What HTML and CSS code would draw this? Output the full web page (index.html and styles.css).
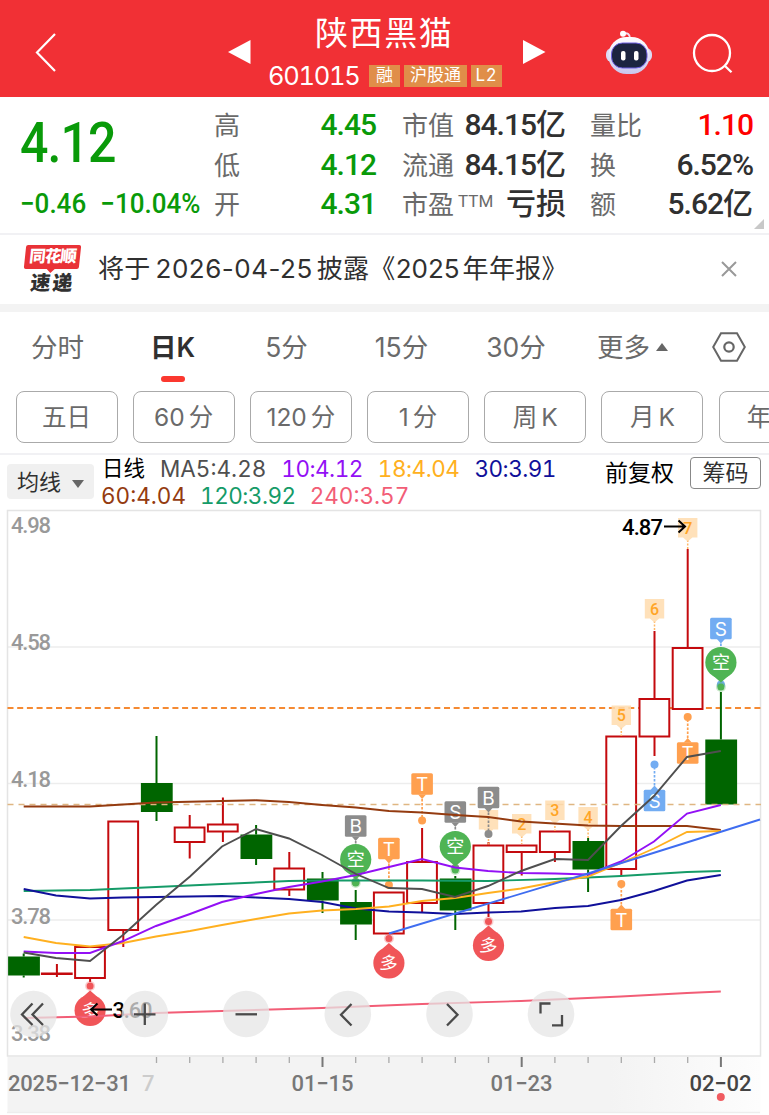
FILE: index.html
```html
<!DOCTYPE html>
<html lang="zh-CN">
<head>
<meta charset="UTF-8">
<meta name="viewport" content="width=device-width, initial-scale=1.0">
<title>陕西黑猫 601015</title>
<link rel="stylesheet" href="styles.css">
</head>
<body>
<header class="header">
    <svg class="back" width="24" height="42" viewBox="0 0 24 42"><path d="M21 2 3 20.500 21 39" fill="none" stroke="#fff" stroke-width="2.200"/></svg>
    <svg class="prev" width="23" height="26" viewBox="0 0 23 26"><path d="M0 13 22.500 1v24z" fill="#fff"/></svg>
    <div class="stock">
        <h1>陕西黑猫</h1>
        <div class="code"><span class="num">601015</span><span class="tag tag-rong">融</span><span class="tag tag-hgt">沪股通</span><span class="tag tag-l2">L2</span></div>
    </div>
    <svg class="next" width="23" height="26" viewBox="0 0 23 26"><path d="M22.500 13 0 1v24z" fill="#fff"/></svg>
    <svg class="robot" width="48" height="46" viewBox="0 0 48 46">
        <defs><linearGradient id="head" x1="0" y1="0" x2="0" y2="1"><stop offset="0" stop-color="#fff"/><stop offset="1" stop-color="#c9c6ee"/></linearGradient></defs>
        <path d="M18 3.500q7-1.500 7 5" fill="none" stroke="#f3dff0" stroke-width="2"/>
        <circle cx="18" cy="3.700" r="3" fill="#fff"/>
        <rect x="1" y="18" width="46" height="14" rx="6" fill="#dcdaf4"/>
        <rect x="3.500" y="7" width="41" height="37" rx="18" fill="url(#head)"/>
        <rect x="6.500" y="13" width="35.500" height="25" rx="11" fill="#1c2440" stroke="#6c5fe0" stroke-width="1"/>
        <rect x="16" y="21" width="4.500" height="9.500" rx="2" fill="#fff"/>
        <rect x="29" y="21" width="4.500" height="9.500" rx="2" fill="#fff"/>
    </svg>
    <svg class="search" width="42" height="42" viewBox="0 0 42 42"><circle cx="20" cy="20" r="18" fill="none" stroke="#fff" stroke-width="2.300"/><path d="m32.500 32.500 7 6.800" stroke="#fff" stroke-width="2.300"/></svg>
</header>

<section class="quote">
    <div class="price">
        <strong>4.12</strong>
        <div class="change"><span>−0.46</span><span>−10.04%</span></div>
    </div>
    <dl class="stats">
        <dt>高</dt><dd class="down">4.45</dd><dt>市值</dt><dd>84.15<i>亿</i></dd><dt>量比</dt><dd class="up">1.10</dd>
        <dt>低</dt><dd class="down">4.12</dd><dt>流通</dt><dd>84.15<i>亿</i></dd><dt>换</dt><dd>6.52%</dd>
        <dt>开</dt><dd class="down">4.31</dd><dt>市盈<sup>TTM</sup></dt><dd><i>亏损</i></dd><dt>额</dt><dd>5.62<i>亿</i></dd>
    </dl>
    <span class="corner"></span>
</section>

<section class="notice">
    <div class="express"><b>同花顺</b><em>速递</em></div>
    <p>将于<span class="date">2026-04-25</span>披露《<span class="year">2025</span>年年报》</p>
    <svg width="16" height="16" viewBox="0 0 16 16"><path d="m1 1 14 14M15 1 1 15" stroke="#999" stroke-width="2"/></svg>
</section>

<nav class="tabs">
    <a>分时</a><a class="active">日K</a><a>5分</a><a>15分</a><a>30分</a><a>更多<span class="caret-up"></span></a>
    <svg width="34" height="30" viewBox="0 0 34 30"><path d="M9 1.200h16l7.800 13.800L25 28.800H9L1.200 15z" fill="none" stroke="#666" stroke-width="2"/><circle cx="17" cy="15" r="4.700" fill="none" stroke="#666" stroke-width="2.200"/></svg>
</nav>

<nav class="periods">
    <a>五日</a><a>60<span>分</span></a><a>120<span>分</span></a><a>1<span>分</span></a><a>周<span>K</span></a><a>月<span>K</span></a><a class="year-k">年</a>
</nav>

<section class="legend">
    <button class="ma-select">均线<span class="caret-down"></span></button>
    <div class="ma">
        <div><span class="cycle">日线</span><span class="ma5">MA5:4.28</span><span class="ma10">10:4.12</span><span class="ma18">18:4.04</span><span class="ma30">30:3.91</span></div>
        <div><span class="ma60">60:4.04</span><span class="ma120">120:3.92</span><span class="ma240">240:3.57</span></div>
    </div>
    <span class="adjust">前复权</span>
    <button class="chips">筹码</button>
</section>

<svg class="chart" width="769" height="607" viewBox="0 508 769 607">
    <defs>
        <linearGradient id="axis" x1="0" y1="0" x2="1" y2="0"><stop offset="0.800" stop-color="#f3f3f3"/><stop offset="1" stop-color="#fdfdfd"/></linearGradient>
    </defs>
    <rect x="7.500" y="1057" width="753" height="56" fill="url(#axis)"/>
    <path class="grid" d="M8 647H760M8 783.500H760M8 920H760M7 1112.500H760"/>
    <rect class="frame" x="7.500" y="510.500" width="753" height="545.500"/>
    <g class="scale">
        <text x="11" y="533" textLength="40">4.98</text>
        <text x="11" y="650" textLength="40">4.58</text>
        <text x="11" y="786.500" textLength="40">4.18</text>
        <text x="11" y="923.500" textLength="40">3.78</text>
        <text x="11" y="1040.500" textLength="40">3.38</text>
    </g>
    <path class="cost" d="M7.500 708H761"/>
    <g id="candles"></g>
    <path class="last" d="M7.500 804.500H761"/>
    <g id="marks"></g>
    <g class="lines">
        <polyline class="ma60" points="23.700,806.500 90,806.500 156,802.500 222,801 256,800.300 289,802 322,805 356,807.500 389,811 422,812.500 455,815 488,817 521,821.500 554,823.500 588,825.500 621,826 687,826 720.800,830"/>
        <polyline class="ma120" points="23.700,891 90,890 156,887 222,884 289,881 322,880.500 422,880.500 488,881 555,879 621,876 687,872 720.800,871"/>
        <polyline class="ma240" points="23.700,1018 90,1016.500 156,1013 222,1011 322,1008 422,1004 521,1001 621,996.500 687,993 720.800,991.500"/>
        <polyline class="ma30" points="23.700,889 56,895.500 90,898.500 123,897.500 156,897 222,896 256,897.500 289,899 322,902 356,908.500 389,911.500 422,912.500 455,914 488,912.500 521,911.500 555,908 588,906 621,900 654,891 687,880.500 720.800,875"/>
        <polyline class="ma18" points="23.700,937 56,943 90,946.500 123,943 156,936.500 190,931 222,925 256,919 289,913.500 322,910.500 356,909 389,906.500 422,901 455,898 488,893 521,888.500 555,882 588,876.500 621,863 654,848.500 687,832 720.800,831"/>
        <polyline class="ma10" points="23.700,951.500 56,953 90,953 123,941 156,926 190,914 222,902 256,894 289,887 322,881.500 356,875 389,867 422,859 455,867.500 488,871 521,873 555,873.500 588,874.500 621,861.500 654,841.500 687,813.500 720.800,805"/>
        <polyline class="ma5" points="23.700,952.500 56,958 90,961 123,935 156,905 190,876.500 222,846.500 256,829 289,838.500 322,855 356,874 389,888 422,889 455,897 488,886 521,871 555,859 588,860 621,826 654,796 687,757 720.800,751"/>
        <polyline class="trend" points="389,933.500 588,873.500 760,819.500"/>
    </g>
    <g class="peak">
        <text x="622" y="535" textLength="41">4.87</text>
        <path d="M664 526.500H685M678.500 520.500 685 526.500 678.500 532.500"/>
        <text x="112.500" y="1017.500" textLength="40">3.60</text>
        <path d="M112 1009.500H91M97.500 1003.500 91 1009.500 97.500 1015.500"/>
    </g>
    <g id="ticks"></g>
    <g class="days">
        <text x="8" y="1091" textLength="123">2025−12−31</text>
        <text class="faded" x="142" y="1091">7</text>
        <text x="291.500" y="1091" textLength="62">01−15</text>
        <text x="490.500" y="1091" textLength="62">01−23</text>
        <text class="today" x="689.500" y="1091" textLength="62">02−02</text>
        <circle cx="720.800" cy="1097" r="4" fill="#f05b60"/>
    </g>
    <g class="tools">
        <circle cx="33.500" cy="1014" r="23.300"/><path d="M32.500 1003.500 22 1014.500 32.500 1025M43 1003.500 32.500 1014.500 43 1025"/>
        <circle cx="144.800" cy="1014" r="23.300"/><path d="M134 1014.300H155.500M144.800 1003.500V1025"/>
        <circle cx="246.200" cy="1014" r="23.300"/><path d="M235.500 1014.300H257"/>
        <circle cx="347.800" cy="1014" r="23.300"/><path d="M351.500 1004 341 1014.800 351.500 1025.500"/>
        <circle cx="449.500" cy="1014" r="23.300"/><path d="M447 1004 457.500 1014.800 447 1025.500"/>
        <circle cx="551" cy="1014" r="23.300"/><path d="M540.500 1013.500V1003.500H550.500M552 1025.300H562V1015"/>
    </g>
</svg>
<script src="chart.js"></script>
</body>
</html>
```

FILE: styles.css
```css
* {
    box-sizing: border-box;
}
body {
    margin: 0;
    width: 769px;
    height: 1115px;
    overflow: hidden;
    background: #fff;
    color: #303030;
    font-family: Inter, "Noto Sans CJK SC", sans-serif;
}
h1, p, dl, dd {
    margin: 0;
}
button {
    padding: 0;
    font: inherit;
    background: none;
}
svg {
    display: block;
    flex: none;
}

/* header */
.header {
    display: flex;
    height: 97px;
    background: #f13035;
    color: #fff;
}
.back { margin: 32px 0 0 34px; }
.prev { margin: 39px 0 0 170px; }
.stock {
    flex: none;
    width: 250px;
    margin-left: 17px;
}
.stock h1 {
    margin: 11px 0 0 47px;
    font-size: 33px;
    line-height: 44px;
    font-weight: 400;
    letter-spacing: 1.6px;
    white-space: nowrap;
}
.code {
    display: flex;
    align-items: center;
    height: 40px;
}
.num {
    flex: none;
    width: 101px;
    font-size: 25.500px;
    line-height: 40px;
    margin-top: 1px;
    letter-spacing: -1.3px;
    font-variant-numeric: tabular-nums;
}
.tag {
    flex: none;
    height: 22px;
    margin: 2px 4px 0 0;
    background: #e08e49;
    font-size: 17px;
    line-height: 20px;
    text-align: center;
    white-space: nowrap;
}
.tag-rong { width: 31px; }
.tag-hgt { width: 63px; }
.tag-l2 { width: 31px; letter-spacing: 1px; }
.next { margin: 39px 0 0 5px; }
.robot { margin: 30px 0 0 59px; }
.search { margin: 33px 0 0 39px; }

/* quote */
.quote {
    position: relative;
    display: flex;
    height: 138px;
    padding: 8px 0 0 20px;
    border-bottom: 2px solid #f1f1f4;
    font-family: Roboto, "Noto Sans CJK SC", sans-serif;
}
.price {
    width: 194px;
    color: #099a09;
}
.price strong {
    display: block;
    height: 79px;
    font-size: 55px;
    line-height: 76px;
    font-weight: 500;
    letter-spacing: -1px;
    transform: scaleX(0.91);
    transform-origin: 0 0;
}
.change {
    display: flex;
    gap: 15px;
    font-size: 27.500px;
    line-height: 39px;
    font-weight: 500;
    white-space: nowrap;
    transform: scaleX(0.945);
    transform-origin: 0 0;
}
.stats {
    display: grid;
    grid-template-columns: 60px 102px 101px 89px 60px 127px;
    grid-template-rows: repeat(3, 39.500px);
    width: 540px;
}
.stats dt {
    font-size: 26px;
    line-height: 42px;
    color: #6a6a6a;
    white-space: nowrap;
}
.stats dt:nth-of-type(3n+2) { margin-left: 26px; }
.stats dt:nth-of-type(3n) { margin-left: 24px; }
.stats dd {
    display: flex;
    justify-content: flex-end;
    font-size: 30px;
    line-height: 40px;
    font-weight: 500;
    letter-spacing: -1px;
    white-space: nowrap;
}
.stats dd i {
    font-style: normal;
    font-size: 30px;
    line-height: 40px;
    letter-spacing: 0;
}
.stats .down { color: #099a09; }
.stats .up { color: #f00; }
.stats sup {
    margin-left: 4px;
    font-size: 17px;
    line-height: 0;
    vertical-align: 7px;
}
.corner {
    position: absolute;
    right: 5px;
    bottom: 4px;
    border: 5px solid #c8c8c8;
    border-top-color: transparent;
    border-left-color: transparent;
}

/* notice */
.notice {
    display: flex;
    height: 77px;
    border-bottom: 8px solid #f3f3f3;
}
.express {
    width: 59px;
    height: 50px;
    margin: 10px 0 0 24px;
    text-align: center;
    font-weight: 900;
}
.express b {
    position: relative;
    display: block;
    width: 55px;
    height: 24px;
    margin-left: 1px;
    border-radius: 2px;
    background: #e93237;
    color: #fff;
    font-size: 16.500px;
    line-height: 23px;
    letter-spacing: -1px;
    transform: skewX(-6deg);
}
.express b::after {
    content: "";
    position: absolute;
    left: 23px;
    top: 24px;
    border: 4px solid transparent;
    border-top-color: #e93237;
}
.express em {
    display: block;
    margin-left: -2px;
    font-size: 20px;
    font-style: normal;
    line-height: 28px;
    letter-spacing: 2px;
    transform: skewX(-6deg);
}
.notice p {
    width: 622px;
    margin-left: 15px;
    font-size: 26px;
    line-height: 68px;
    letter-spacing: 0.3px;
    white-space: nowrap;
}
.date { margin: 0 4px 0 5px; letter-spacing: 0.5px; }
.year { margin-right: 3px; letter-spacing: 0; }
.notice svg { margin: 26px 0 0 1px; }

/* tabs */
.tabs {
    display: grid;
    grid-template-columns: 115px 115px 113px 117px 112px 109px 1fr;
    height: 73px;
    color: #6a6a6a;
    font-size: 26.500px;
    line-height: 70px;
    text-align: center;
    white-space: nowrap;
}
.tabs a:nth-child(6) { text-align: left; padding-left: 25px; }
.tabs svg { margin: 20px 0 0 31px; }
.tabs .active {
    color: #303030;
    font-weight: 600;
}
.active::after {
    content: "";
    display: block;
    width: 24px;
    height: 6px;
    margin: -6px auto 0;
    border-radius: 3px;
    background: #fb382f;
}
.caret-up {
    display: inline-block;
    margin: 0 0 6px 6px;
    border: 6px solid transparent;
    border-top: 0;
    border-bottom: 8px solid #666;
}
.periods {
    display: flex;
    gap: 15.200px;
    height: 70px;
    padding: 6px 0 0 15.500px;
    border-bottom: 2px solid #f1f1f4;
    overflow: hidden;
    color: #6a6a6a;
}
.periods a {
    flex: none;
    width: 102px;
    height: 52px;
    border: 1.500px solid #aaa;
    border-radius: 8px;
    font-size: 24.500px;
    line-height: 51px;
    text-align: center;
}
.periods span { margin-left: 4px; }
.periods .year-k {
    padding-left: 27px;
    text-align: left;
}

/* moving averages */
.legend {
    display: flex;
    height: 53px;
}
.ma-select {
    width: 87px;
    height: 35px;
    margin: 9px 8px 0 7px;
    border: 0;
    border-radius: 4px;
    background: #f0f0f0;
    color: #303030;
    font-size: 22px;
    line-height: 34px;
}
.caret-down {
    display: inline-block;
    margin: 0 0 2px 11px;
    border: 6px solid transparent;
    border-bottom: 0;
    border-top: 8px solid #666;
}
.ma {
    width: 503px;
    font-size: 22.500px;
    line-height: 27px;
    font-variant-numeric: tabular-nums;
}
.ma div {
    display: flex;
    gap: 15px;
    white-space: nowrap;
}
.ma div + div {
    gap: 14px;
    margin-left: -1px;
}
.ma .ma10, .ma .ma18, .ma .ma30, .ma .ma120 { letter-spacing: -0.5px; }
.cycle { color: #000; font-size: 21.500px; }
.adjust {
    color: #000;
    font-size: 23px;
    line-height: 37px;
}
.chips {
    width: 71px;
    height: 32px;
    margin: 2px 0 0 16px;
    border: 1.500px solid #888;
    border-radius: 4px;
    color: #303030;
    font-size: 23px;
    line-height: 28px;
}
.ma5 { color: #4f4f4f; stroke: #4f4f4f; }
.ma10 { color: #9310f5; stroke: #9310f5; }
.ma18 { color: #ffb020; stroke: #ffb020; }
.ma30 { color: #10109a; stroke: #10109a; }
.ma60 { color: #943b10; stroke: #943b10; }
.ma120 { color: #159b68; stroke: #159b68; }
.ma240 { color: #f25d76; stroke: #f25d76; }
.trend { stroke: #3f6df0; }

/* chart */
.chart {
    font-family: Roboto, "Noto Sans CJK SC", sans-serif;
    font-weight: 500;
}
.lines polyline {
    fill: none;
    stroke-width: 1.900;
}
.grid { stroke: #ededed; stroke-width: 1.500; }
.frame { fill: none; stroke: #e4e4e4; stroke-width: 1.500; }
.scale text { fill: #999; font-size: 22px; }
.cost { stroke: #f58a33; stroke-width: 2; stroke-dasharray: 6 3.700; }
.last { stroke: #dfb682; stroke-width: 1.300; stroke-dasharray: 6 5; }
.rise { fill: #fff; stroke: #c40a0e; stroke-width: 2; }
.fall { fill: #006500; stroke: #006500; stroke-width: 2; }
.peak text { font-size: 22px; fill: #000; }
.peak path { fill: none; stroke: #000; stroke-width: 2; }
.days text { font-size: 22px; fill: #777; }
.days .faded { fill: #ccc; }
.days .today { fill: #444; }
.tools circle { fill: #e6e6e6; opacity: 0.75; }
.tools path { fill: none; stroke: #4a4a4a; stroke-width: 2.300; }
.mark { text-anchor: middle; fill: #fff; font-weight: 400; }
```

FILE: chart.js
```js
const NS = 'http://www.w3.org/2000/svg';
const FIRST = 23.7;
const STEP = 33.2;

// [type, high, body top, body bottom, low]
const candles = [
    ['fall', 953.5, 956.5, 975.5, 977.5],
    ['rise', 964, 973.5, 974, 977],
    ['rise', 947, 947, 978, 982],
    ['rise', 821.5, 821.5, 930, 947],
    ['fall', 736, 783, 812, 821],
    ['rise', 815, 827.5, 842, 858.5],
    ['rise', 797.5, 824.5, 831.5, 842],
    ['fall', 825, 834.5, 859, 865],
    ['rise', 852, 868.5, 889.5, 896],
    ['fall', 872, 878.5, 900.5, 913],
    ['fall', 890, 902, 924.5, 940],
    ['rise', 892.5, 892.5, 933.5, 933.5],
    ['rise', 828, 862, 903, 912.5],
    ['fall', 876, 878.5, 910.5, 930],
    ['rise', 842, 845.5, 903, 917],
    ['rise', 845.5, 845.5, 852, 875.5],
    ['rise', 831.5, 831.5, 852, 862],
    ['fall', 838, 841, 869.5, 892],
    ['rise', 736.5, 736.5, 869, 876],
    ['rise', 631, 699, 736.5, 756],
    ['rise', 549, 648, 709, 709],
    ['fall', 692, 739.5, 804.5, 804.5]
];

// square flags: [candle, label, centre y, dot y, colour]
const flags = [
    [10, 'B', 826, 882, '#8c8c8c'],
    [11, 'T', 848.5, 885, '#ffa04f'],
    [12, 'T', 784, 820.5, '#ffa04f'],
    [13, 'S', 812, 868, '#8c8c8c'],
    [14, 'B', 797.5, 834, '#8c8c8c'],
    [18, 'T', 919.5, 884, '#ffa04f'],
    [19, 'S', 800.5, 764.5, '#72acf2'],
    [20, 'T', 753, 717, '#ffa04f'],
    [21, 'S', 628.5, 684.5, '#72acf2']
];

// countdown digits: [candle, label, centre y, stem end]
const counts = [
    [14, '', 820, 845], [15, '2', 824, 844], [16, '3', 810.5, 831], [17, '4', 817, 838],
    [18, '5', 715.5, 736], [19, '6', 609, 631], [20, '7', 528, 549]
];

// round pins: [candle, label, centre y, dot y, colour]
const pins = [
    [2, '多', 1010.5, 986, '#f05558'],
    [10, '空', 859.5, 883, '#4fb454'],
    [11, '多', 963, 938.5, '#f05558'],
    [13, '空', 846.5, 870, '#4fb454'],
    [14, '多', 945.5, 921.5, '#f05558'],
    [21, '空', 662.5, 687, '#4fb454']
];

function x(i) {
    return FIRST + STEP * i;
}

function add(parent, tag, attrs, text) {
    const el = document.createElementNS(NS, tag);
    for (let key in attrs) {
        el.setAttribute(key, attrs[key]);
    }
    if (text) el.textContent = text;
    parent.appendChild(el);
    return el;
}

const candleLayer = document.getElementById('candles');
candles.forEach(function([type, high, top, bottom, low], i) {
    add(candleLayer, 'path', { class: type, d: `M${x(i)} ${high}V${top}M${x(i)} ${bottom}V${low}` });
    const inset = type === 'fall' ? 1 : 0;
    add(candleLayer, 'rect', {
        class: type, x: x(i) - 15 + inset * 0.4, y: top + inset, width: 29.8, height: bottom - top - inset * 2
    });
});

const marks = document.getElementById('marks');
counts.forEach(function([i, label, y, end]) {
    add(marks, 'path', { d: `M${x(i)} ${y + 12}V${end}`, stroke: '#ffb765', 'stroke-width': 1.5, 'stroke-dasharray': '2 1.5' });
    add(marks, 'path', { d: `M${x(i) - 9.7} ${y - 10}h19.400v19.500h-5l-4.700 4-4.700-4h-5z`, fill: '#ffdcae', opacity: 0.85 });
    add(marks, 'text', { class: 'mark', x: x(i), y: y + 5.5, style: 'fill:#ffa526;font-size:16px;font-weight:500' }, label);
});
flags.forEach(function([i, label, y, dot, color]) {
    const dir = dot > y ? 1 : -1;
    add(marks, 'path', { d: `M${x(i)} ${y + 11 * dir}V${dot}`, stroke: color, 'stroke-width': 1.7, 'stroke-dasharray': '2.5 1.5' });
    add(marks, 'circle', { cx: x(i), cy: dot, r: 4, fill: color });
    add(marks, 'rect', { x: x(i) - 10.8, y: y - 10.8, width: 21.6, height: 21.6, rx: 1.5, fill: color });
    add(marks, 'path', { d: `M${x(i) - 4} ${y + 10.5 * dir}h8l-4 ${4.5 * dir}z`, fill: color });
    add(marks, 'text', { class: 'mark', x: x(i), y: y + 7, style: 'font-family:Inter;font-size:19px' }, label);
});
pins.forEach(function([i, label, y, dot, color]) {
    const dir = dot > y ? 1 : -1;
    add(marks, 'circle', { cx: x(i), cy: dot, r: 5, fill: color, opacity: 0.3 });
    add(marks, 'circle', { cx: x(i), cy: dot, r: 3.5, fill: color });
    add(marks, 'circle', { cx: x(i), cy: y, r: 15.6, fill: color });
    add(marks, 'path', { d: `M${x(i) - 8} ${y + 13 * dir}h16l-8 ${7 * dir}z`, fill: color });
    const attrs = { class: 'mark', x: x(i), y: y + 6.5, style: 'font-size:18px' };
    if (label === '多') attrs.transform = `rotate(8 ${x(i)} ${y})`;
    add(marks, 'text', attrs, label);
});

const ticks = document.getElementById('ticks');
for (let i = 4; i < candles.length; i++) {
    const major = i === 9 || i === 15 || i === 21;
    add(ticks, 'path', {
        d: `M${x(i)} 1057v${major ? 10 : 6}`, stroke: major ? '#777' : '#aaa', 'stroke-width': major ? 2 : 1.3
    });
}
```
